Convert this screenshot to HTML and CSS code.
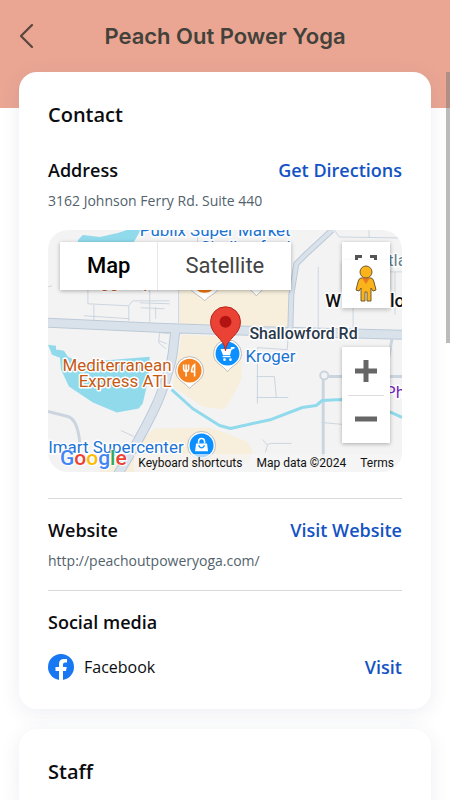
FILE: index.html
```html
<!DOCTYPE html>
<html lang="en">
<head>
<meta charset="utf-8">
<meta name="viewport" content="width=device-width, initial-scale=1">
<title>Peach Out Power Yoga</title>
<link rel="stylesheet" href="styles.css">
</head>
<body>
<header class="header">
  <button class="back" type="button" aria-label="Back">
    <svg width="16" height="26" viewBox="0 0 16 26"><path d="M14 2 3 13l11 11" fill="none" stroke="#5d463e" stroke-width="2.300" stroke-linecap="round" stroke-linejoin="round"/></svg>
  </button>
  <h1 class="title">Peach Out Power Yoga</h1>
</header>
<main class="content">
  <section class="card">
    <h2 class="card-title">Contact</h2>
    <div class="block">
      <div class="row"><h3 class="label">Address</h3><a class="action" href="#directions">Get Directions</a></div>
      <p class="detail">3162 Johnson Ferry Rd. Suite 440</p>
      <div class="map">
        <svg class="map-canvas" viewBox="0 0 355 243" preserveAspectRatio="xMidYMid slice">
          <rect width="355" height="243" fill="#f4f3f4"/>
          <g fill="#f7efdc">
            <path d="M132 50h102l7 8v42l-109-2zM134 105l48 2 5 13 7 10v20l-9 17-8 13-22-3-30-20z"/>
            <path d="M107 199l55-1 12 4 26 10 5 10-3 10-110 11H50l18-13z"/>
          </g>
          <g fill="#90daec">
            <path d="M30 10l5-5 17 2 18-4 9-3h14l-8 14H30zM0 115l8 1v4l2 0 6 1 4 6 12 6 70-6-1 22-2 8-4 17-4 5-22 4-24-10-24-16-8-17-1-12-8-3z"/>
          </g>
          <g fill="none" stroke="#cbd5df" stroke-width="1">
            <path d="M40 50v24l41 2 4-5h37M46 75v17M36 86l46 3M81 76v15M102 50v43M92 73l30 1M108 77v12M93 78l24 1M112 101l-1 12 7 6M112 103l10 1M111 111l8 3M0 57l4-1"/>
            <path d="M131 50v43M271 37v61M287 0l5 7 63 1M322 0v8M306 78v20M348 42v43M210 118v56M209 147h18l2 21M209 168h32M210 118l30 2 1-18M274 193l22 2M73 201l13 6M215 210l5 6-2 7M220 215l4-1h20M332 42h23M150 1v15"/>
          </g>
          <g fill="none" stroke="#d9e2ea" stroke-linejoin="round">
            <path d="M0 182l20 5q10 3 12 28" stroke="#cbd5df" stroke-width="3"/>
            <path d="M128 99l-2 16q-1 16-7 32-5 18-14 36-13 27-35 62M0 93l110 5 90 3 155 4" stroke="#bccad7" stroke-width="10"/>
            <path d="M285 0l-25 23-11 11-5 31-1 36" stroke="#bccad7" stroke-width="6"/>
            <path d="M128 99l-2 16q-1 16-7 32-5 18-14 36-13 27-35 62M0 93l110 5 90 3 155 4" stroke-width="8"/>
            <path d="M285 0l-25 23-11 11-5 31-1 36" stroke-width="4"/>
            <path d="M276 227v-77l4-3h75M345 109l-4 22" stroke="#cbd5df" stroke-width="3"/>
            <circle cx="277" cy="146" r="4" fill="#f4f3f4" stroke="#cbd5df" stroke-width="2"/>
            <path d="M124 160l21 19 27 17 11 3 41-9 31-12 14-2 6-5 19-1 50 13 11 5" stroke="#90daec" stroke-width="3"/>
          </g>
          <path d="M142 55c0 8 10 10 15 16 5-6 15-8 15-16zM200 54c0 5 5 7 9 12 4-5 9-7 9-12z" fill="#fff" stroke="#bbb"/>
          <circle cx="157" cy="51" r="12" fill="#f27b12"/>
          <g class="poi">
            <text x="92" y="6" fill="#1b73d3">Publix Super Market</text>
            <text x="153" y="23" fill="#1b73d3">Shallowford</text>
            <text x="43" y="58" fill="#c65a15">Eggs Up</text>
            <text x="124" y="141" text-anchor="end" fill="#c65a15">Mediterranean</text>
            <text x="124" y="157" text-anchor="end" fill="#c65a15">Express ATL</text>
            <text x="198" y="132" fill="#1b73d3">Kroger</text>
            <text x="136" y="224" text-anchor="end" fill="#1b73d3">Walmart Supercenter</text>
            <text x="338" y="168" fill="#7627bb">Ph</text>
            <text x="341" y="36" fill="#637f8d">tla</text>
            <text class="road" x="202" y="109">Shallowford Rd</text>
            <text class="place" x="278" y="77">W</text>
            <text class="place" x="343" y="77">lo</text>
          </g>
          <path d="M142 159c-4-6-14-8-14-18a14 14 0 0 1 28 0c0 10-10 12-14 18z" fill="#fff" stroke="#bbb"/>
          <circle cx="142" cy="141" r="12" fill="#f5821f"/>
          <path d="M136 135v4q0 3 2.500 3t2.500-3v-4M138.500 135v12M147 147v-12q-3 2-3 7h3" fill="none" stroke="#fff" stroke-width="1.600"/>
          <path d="M180 142c-4-6-14-8-14-18a14 14 0 0 1 28 0c0 10-10 12-14 18z" fill="#fff" stroke="#bbb"/>
          <circle cx="180" cy="124" r="12" fill="#0d90ff"/>
          <path d="M187 118h-3l-2 7h-6l-2-5h9zM183 127h-8" fill="#fff" stroke="#fff" stroke-width="1.300"/>
          <circle cx="177" cy="130" r="1.300" fill="#fff"/><circle cx="183" cy="130" r="1.300" fill="#fff"/>
          <circle cx="154" cy="216" r="14" fill="#fff" stroke="#bbb"/>
          <circle cx="154" cy="216" r="12" fill="#0d90ff"/>
          <path d="M148.500 214h11l1 8h-13z" fill="#fff"/>
          <path d="M151 214v-2a3 3 0 0 1 6 0v2" fill="none" stroke="#fff" stroke-width="1.500"/>
          <path d="M151 216q3 5 6 0" fill="none" stroke="#0d90ff" stroke-width="1.300"/>
          <path d="M178 121c-1-13-15-15-15-29a15 15 0 0 1 30 0c0 14-14 16-15 29z" fill="#ea4335" stroke="#b8241b" stroke-width="1"/>
          <circle cx="178" cy="92" r="6" fill="#b31412"/>
        </svg>
        <div class="map-types">
          <button class="map-type map-type-on" type="button">Map</button>
          <button class="map-type" type="button">Satellite</button>
        </div>
        <button class="ctl fullscreen" type="button" aria-label="Toggle fullscreen">
          <svg width="22" height="22" viewBox="0 0 22 22"><path d="M1.500 7V1.500H7M15 1.500h5.500V7M1.500 15v5.500H7M15 20.500h5.500V15" fill="none" stroke="#555" stroke-width="3"/></svg>
        </button>
        <button class="ctl pegman" type="button" aria-label="Street View">
          <svg width="22" height="38" viewBox="0 0 22 38"><path d="M6 13h10q2 0 3 4l2 8-3 1-2-3v13h-4V27h-2v9H6V23l-2 3-3-1 2-8q1-4 3-4z" fill="#fbb31c" stroke="#715a2c"/><path d="M7 13h8l-4 6z" fill="#e97920"/><circle cx="11" cy="7" r="6" fill="#fbb31c" stroke="#715a2c"/></svg>
        </button>
        <div class="ctl zoom">
          <button type="button" aria-label="Zoom in"><svg width="22" height="22" viewBox="0 0 22 22"><path d="M0 11h22M11 0v22" stroke="#666" stroke-width="5"/></svg></button>
          <button type="button" aria-label="Zoom out"><svg width="22" height="22" viewBox="0 0 22 22"><path d="M0 11h22" stroke="#666" stroke-width="5"/></svg></button>
        </div>
        <a class="google" href="#google"><span class="g-blue">G</span><span class="g-red">o</span><span class="g-yellow">o</span><span class="g-blue">g</span><span class="g-green">l</span><span class="g-red">e</span></a>
        <div class="map-foot"><button type="button">Keyboard shortcuts</button><span>Map data ©2024</span><a href="#terms">Terms</a></div>
      </div>
    </div>
    <div class="block ruled">
      <div class="row"><h3 class="label">Website</h3><a class="action" href="#website">Visit Website</a></div>
      <p class="detail">http://peachoutpoweryoga.com/</p>
    </div>
    <div class="block ruled">
      <h3 class="label">Social media</h3>
      <div class="row social">
        <svg width="26" height="26" viewBox="0 0 26 26"><circle cx="13" cy="13" r="13" fill="#1877f2"/><path d="M11 26v-9H7.500v-4H11v-3q0-5 5-5h3v3.500h-2q-2 0-2 2V13h3.700l-.7 4h-3v9z" fill="#fff"/></svg>
        <span class="network">Facebook</span>
        <a class="action" href="#facebook">Visit</a>
      </div>
    </div>
  </section>
  <section class="card"><h2 class="card-title">Staff</h2></section>
</main>
<div class="scrollbar"></div>
</body>
</html>
```
FILE: styles.css
```css
* { box-sizing: border-box; }
html { height: 100%; overflow: hidden; }
body {
  height: 100%;
  margin: 0;
  overflow: hidden;
  background: #fff;
  color: #0b0c10;
  font-family: "Open Sans", sans-serif;
}
h1, h2, h3, p { margin: 0; }
button { border: 0; padding: 0; background: none; color: inherit; font: inherit; }
a { text-decoration: none; color: inherit; }
svg { display: block; }

.header {
  display: grid;
  grid-template-columns: 40px 1fr 40px;
  align-items: center;
  padding: 16px 12px 52px 12px;
  background: #eaa693;
}
.back { display: flex; justify-content: center; height: 40px; align-items: center; padding-right: 12px; }
.title {
  text-align: center;
  color: #42413a;
  font: 600 22px/40px Inter, sans-serif;
  white-space: nowrap;
}

.content { display: grid; gap: 20px; margin-top: -36px; padding: 0 19px; }
.card {
  padding: 29px;
  border-radius: 18px;
  background: #fff;
  box-shadow: 0 4px 20px rgba(60, 70, 110, 0.09);
}
.card-title { font-size: 20px; line-height: 28px; font-weight: 600; }
.block { padding-top: 28px; }
.ruled { margin-top: 26px; padding-top: 18px; border-top: 1px solid #d8d9db; }
.ruled + .ruled { margin-top: 19px; }
.row { display: flex; align-items: center; justify-content: space-between; }
.label { font-size: 18px; line-height: 26px; font-weight: 600; }
.action { color: #1453c4; font-size: 18px; line-height: 26px; font-weight: 600; }
.detail { padding: 8px 0 0; color: #52626c; font-size: 14px; line-height: 20px; }
.social { gap: 10px; padding-top: 19px; }
.network { flex: 1; font-size: 16px; line-height: 26px; }

.map {
  position: relative;
  margin-top: 19px;
  overflow: hidden;
  border-radius: 20px;
  font-family: Roboto, sans-serif;
}
.map-canvas { width: 100%; height: auto; }
.poi { font: 17px Roboto, sans-serif; stroke: #fff; stroke-width: 3px; stroke-linejoin: round; paint-order: stroke; }
.road { fill: #293849; font-size: 16px; font-weight: 500; }
.place { fill: #111; font-size: 18px; font-weight: 500; }
.map-types {
  position: absolute;
  top: 12px;
  left: 12px;
  display: flex;
  background: #fff;
  box-shadow: 0 1px 4px rgba(0, 0, 0, 0.3);
}
.map-type { padding: 0 27px; color: #444; font-size: 22px; line-height: 48px; }
.map-type-on { border-right: 1px solid #e8e8e8; color: #000; font-weight: 500; }
.ctl { position: absolute; right: 12px; width: 48px; background: #fff; box-shadow: 0 1px 4px rgba(0, 0, 0, 0.3); }
.fullscreen { top: 12px; display: flex; justify-content: center; height: 48px; padding-top: 13px; }
.pegman { top: 30px; display: flex; justify-content: center; height: 48px; padding-top: 5px; box-shadow: 0 2px 4px rgba(0, 0, 0, 0.2); }
.zoom { top: 117px; }
.zoom button { display: flex; width: 100%; height: 48px; align-items: center; justify-content: center; }
.zoom button + button::before { content: ""; position: absolute; top: 48px; left: 6px; right: 6px; height: 1px; background: #ddd; }
.google {
  position: absolute;
  bottom: 0;
  left: 12px;
  font: 500 21px/28px Roboto, sans-serif;
  text-shadow: 0 0 2px #fff, 1px 1px 1px #fff, -1px -1px 1px #fff;
}
.g-blue { color: #4285f4; }
.g-red { color: #ea4335; }
.g-yellow { color: #fbbc05; }
.g-green { color: #34a853; }
.map-foot {
  position: absolute;
  right: 0;
  bottom: 0;
  display: flex;
  gap: 14px;
  padding: 0 8px 0 4px;
  background: rgba(245, 245, 245, 0.7);
  color: #111;
  font-size: 12px;
  line-height: 18px;
}
.scrollbar { position: fixed; top: 72px; right: 0; width: 4px; height: 271px; background: rgba(120, 120, 120, 0.5); }
```
